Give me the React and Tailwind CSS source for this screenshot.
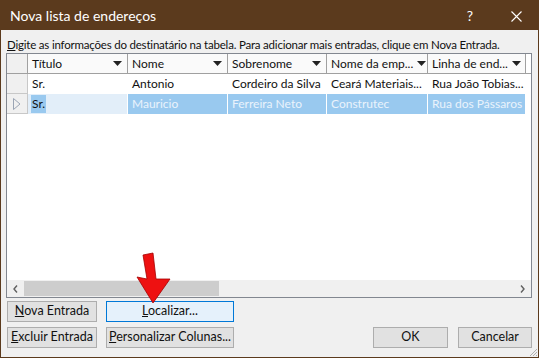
import React from 'react';

const font = { fontFamily: 'Lato, "Noto Sans", sans-serif' };

const columns = [
  { label: 'Título', w: 'w-[100px]' },
  { label: 'Nome', w: 'w-[100px]' },
  { label: 'Sobrenome', w: 'w-[99px]' },
  { label: 'Nome da emp...', w: 'w-[101px]' },
  { label: 'Linha de end...', w: 'w-[98px]' },
];

const row1 = ['Sr.', 'Antonio', 'Cordeiro da Silva', 'Ceará Materiais...', 'Rua João Tobias...'];
const row2 = ['Sr.', 'Mauricio', 'Ferreira Neto', 'Construtec', 'Rua dos Pássaros'];

const Btn = ({ children, className = '', active }) => (
  <button
    className={`h-[21px] text-[12.5px] text-[#111] leading-none whitespace-nowrap border ${
      active ? 'bg-[#e5f1fb] border-[#0078d7]' : 'bg-[#e1e1e1] border-[#adadad]'
    } ${className}`}
  >
    {children}
  </button>
);

const App = () => {
  return (
    <div className="relative w-[539px] h-[358px] flex flex-col bg-[#5b3a1d] overflow-hidden" style={font}>
      {/* Title bar */}
      <div className="h-[30px] shrink-0 flex items-center text-white">
        <span className="pl-[10px] text-[14px] flex-1">Nova lista de endereços</span>
        <span className="w-[46px] text-center text-[14px]">?</span>
        <span className="w-[46px] text-center">
          <svg width="11" height="11" viewBox="0 0 11 11" className="inline-block">
            <path d="M0.5 0.5 L10.5 10.5 M10.5 0.5 L0.5 10.5" stroke="white" strokeWidth="1.1" />
          </svg>
        </span>
      </div>

      {/* Body */}
      <div className="flex-1 mx-[1px] mb-[1px] bg-[#f0f0f0] flex flex-col pl-[5px] pr-[6px]">
        <div className="h-[23px] pt-[7px] text-[11.5px] tracking-[-0.2px] text-[#111] leading-[15px] whitespace-nowrap pl-[1px]">
          <span className="underline">D</span>igite as informações do destinatário na tabela. Para adicionar mais entradas, clique em Nova Entrada.
        </div>

        {/* Grid */}
        <div className="h-[245px] border border-[#828790] bg-white flex flex-col text-[12px] text-[#111]">
          <div className="flex h-[20px] border-b border-[#a0a0a0]">
            <div className="w-[21px] bg-[#f0f0f0] border-r border-[#a0a0a0]" />
            {columns.map((c) => (
              <div key={c.label} className={`${c.w} flex items-center justify-between pl-[4px] pr-[5px] border-r border-[#a0a0a0] bg-[#fafafa]`}>
                <span className="whitespace-nowrap">{c.label}</span>
                <svg width="9" height="5" viewBox="0 0 9 5" className="shrink-0 ml-[4px]"><path d="M0 0 H9 L4.5 5 Z" fill="#222" /></svg>
              </div>
            ))}
          </div>
          <div className="flex h-[20px]">
            <div className="w-[21px] bg-[#f0f0f0] border-r border-b border-[#c8c8c8]" />
            {row1.map((t, i) => (
              <div key={i} className={`${columns[i].w} flex items-center pl-[4px] whitespace-nowrap overflow-hidden`}>{t}</div>
            ))}
          </div>
          <div className="flex h-[20px]">
            <div className="w-[21px] bg-[#f0f0f0] border-r border-b border-[#c8c8c8] flex items-center justify-center">
              <svg width="8" height="12" viewBox="0 0 8 12"><path d="M0.5 0.5 L7 6 L0.5 11.5 Z" fill="none" stroke="#9aa4b4" /></svg>
            </div>
            {row2.map((t, i) => (
              <div
                key={i}
                className={`${columns[i].w} flex items-center whitespace-nowrap overflow-hidden border-r border-white ${
                  i === 0 ? 'bg-[#e2eef9] pl-[3px]' : 'bg-[#99c9ef] text-[#eaf3fc] pl-[4px]'
                }`}
              >
                {i === 0 ? <span className="bg-[#99c9ef] px-[1px]">{t}</span> : t}
              </div>
            ))}
          </div>
          <div className="flex-1" />
          {/* Horizontal scrollbar */}
          <div className="h-[17px] bg-[#f0f0f0] flex items-stretch">
            <div className="w-[17px] flex items-center justify-center">
              <svg width="5" height="8" viewBox="0 0 5 8"><path d="M4 0.5 L1 4 L4 7.5" fill="none" stroke="#606060" strokeWidth="1.4" /></svg>
            </div>
            <div className="w-[195px] bg-[#cdcdcd] my-[1px]" />
            <div className="flex-1" />
            <div className="w-[17px] flex items-center justify-center">
              <svg width="5" height="8" viewBox="0 0 5 8"><path d="M1 0.5 L4 4 L1 7.5" fill="none" stroke="#606060" strokeWidth="1.4" /></svg>
            </div>
          </div>
        </div>

        {/* Buttons */}
        <div className="flex gap-[9px] mt-[3px] pl-[1px]">
          <Btn className="w-[90px]"><span className="underline">N</span>ova Entrada</Btn>
          <Btn className="w-[128px]" active><span className="underline">L</span>ocalizar...</Btn>
        </div>
        <div className="flex mt-[5px] pl-[1px]">
          <Btn className="w-[90px]"><span className="underline">E</span>xcluir Entrada</Btn>
          <Btn className="w-[128px] ml-[9px]"><span className="underline">P</span>ersonalizar Colunas...</Btn>
          <div className="flex-1" />
          <Btn className="w-[75px]">OK</Btn>
          <Btn className="w-[74px] ml-[10px]">Cancelar</Btn>
        </div>
      </div>

      {/* Resize grip */}
      <svg className="absolute right-[1px] bottom-[1px]" width="10" height="10" viewBox="0 0 10 10">
        <path d="M9 2 L2 9 M9 5 L5 9 M9 8 L8 9" stroke="#b0b0b0" strokeWidth="1" />
      </svg>

      {/* Red arrow overlay */}
      <svg className="absolute left-[134px] top-[252px]" width="40" height="54" viewBox="0 0 40 54">
        <path d="M9 3 L19 1 L22 27 L36 27 L19 51 L3 25 L13 27 Z" fill="#ee1111" stroke="#a40000" strokeWidth="0.8" />
      </svg>
    </div>
  );
};

export default App;
